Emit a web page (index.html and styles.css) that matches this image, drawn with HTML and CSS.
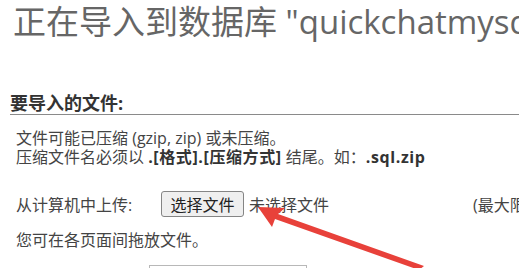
FILE: index.html
```html
<!DOCTYPE html>
<html lang="zh-CN">
<head>
<meta charset="utf-8">
<title>导入</title>
<link rel="stylesheet" href="styles.css">
</head>
<body>
<div class="page">
  <h1 class="title">正在导入到数据库 "quickchatmysql"</h1>
  <div class="section">
    <h2 class="section-head">要导入的文件:</h2>
    <div class="section-body">
      <p class="note">文件可能已压缩 (gzip, zip) 或未压缩。<br>压缩文件名必须以 <b>.[格式].[压缩方式]</b> 结尾。如：<b>.sql.zip</b></p>
      <div class="upload-row">
        <span class="label">从计算机中上传:</span>
        <span class="btn">选择文件</span>
        <span class="nofile">未选择文件</span>
        <span class="limit">(最大限制：2,048 KiB)</span>
      </div>
      <p class="drag">您可在各页面间拖放文件。</p>
      <div class="charset-row">
        <span class="label">文件的字符集:</span>
        <span class="select">utf-8</span>
      </div>
    </div>
  </div>
  <svg class="arrow" width="519" height="268" viewBox="0 0 519 268">
    <polygon points="258,207 285,208 278,214 424,266 419,270 275,219 272,227" fill="#e8413a"/>
  </svg>
</div>
</body>
</html>
```
FILE: styles.css
```css
html, body {
  margin: 0;
  padding: 0;
  background: #fff;
  overflow: hidden;
}
.page {
  position: relative;
  width: 519px;
  height: 268px;
  overflow: hidden;
  font-family: "Open Sans", "Noto Sans CJK SC", sans-serif;
  color: #444;
}
.title {
  margin: 0;
  padding: 1px 0 0 13px;
  font-size: 33px;
  line-height: 42px;
  font-weight: normal;
  color: #666;
  white-space: nowrap;
}
.section {
  margin-top: 50px;
  padding-left: 10px;
}
.section-head {
  margin: 0;
  font-size: 18px;
  line-height: 21px;
  font-weight: bold;
  color: #333;
  border-bottom: 1px solid #8a8a8a;
  white-space: nowrap;
}
.section-body {
  padding-left: 6px;
}
.note {
  margin: 14px 0 0;
  font-size: 16px;
  line-height: 19px;
  white-space: nowrap;
}
.note b {
  color: #333;
  letter-spacing: 0.6px;
}
.upload-row {
  display: flex;
  align-items: center;
  margin-top: 24px;
  font-size: 16px;
  white-space: nowrap;
}
.label {
  flex-shrink: 0;
  width: 145px;
}
.btn {
  flex-shrink: 0;
  box-sizing: border-box;
  height: 26px;
  width: 83px;
  display: flex;
  align-items: center;
  justify-content: center;
  background: #efefef;
  border: 1px solid #858585;
  border-radius: 3px;
  color: #222;
}
.nofile {
  flex-shrink: 0;
  margin-left: 5px;
  width: 224px;
}
.limit {
  flex-shrink: 0;
}
.drag {
  margin: 14px 0 0;
  font-size: 16px;
  line-height: 19px;
  white-space: nowrap;
}
.charset-row {
  display: flex;
  margin-top: 15px;
  font-size: 16px;
  white-space: nowrap;
}
.charset-row .label {
  width: 133px;
}
.select {
  flex-shrink: 0;
  box-sizing: border-box;
  width: 158px;
  height: 24px;
  border: 1px solid #b8b8b8;
  padding-left: 4px;
}
.arrow {
  position: absolute;
  left: 0;
  top: 0;
  pointer-events: none;
}
```
